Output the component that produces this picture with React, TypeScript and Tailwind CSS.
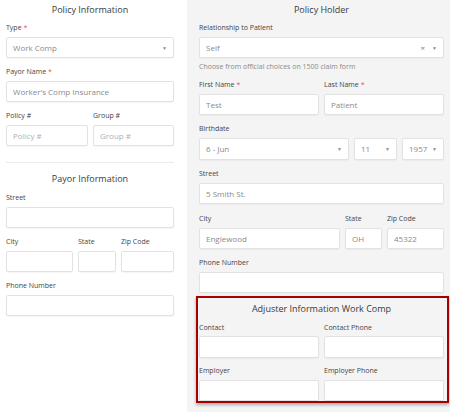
import React from "react";

const font = { fontFamily: '"Open Sans", "Noto Sans", Arial, sans-serif' };

function Label({ text, req }: { text: string; req?: boolean }) {
  return (
    <div className="h-[18px] flex items-center text-[7px] text-[#444] whitespace-nowrap">
      {text}
      {req && <span className="text-[#e05a5a] ml-[2px]">*</span>}
    </div>
  );
}

function Box({ value, className = "", h = "h-[21px]" }: { value?: string; className?: string; h?: string }) {
  return (
    <div
      className={`${h} bg-white border border-[#e2e2e2] rounded-[2px] shadow-[0_1px_1px_rgba(0,0,0,0.04)] flex items-center pl-[6px] text-[8px] text-[#8a8a8a] whitespace-nowrap ${className}`}
    >
      {value}
    </div>
  );
}

function Select({ value, clear, className = "", h = "h-[21px]" }: { value: string; clear?: boolean; className?: string; h?: string }) {
  return (
    <div
      className={`${h} bg-white border border-[#e2e2e2] rounded-[2px] shadow-[0_1px_1px_rgba(0,0,0,0.04)] flex items-center pl-[6px] pr-[6px] text-[8px] text-[#8a8a8a] ${className}`}
    >
      <span className="flex-1">{value}</span>
      {clear && <span className="text-[8px] text-[#777] mr-[7px] leading-none">×</span>}
      <span className="text-[5px] text-[#888] leading-none mt-[1px]">▼</span>
    </div>
  );
}

function Title({ text, className = "" }: { text: string; className?: string }) {
  return (
    <div className={`h-[19px] flex items-center justify-center text-[9px] text-[#3a3a3a] ${className}`}>
      {text}
    </div>
  );
}

export default function App() {
  return (
    <div className="w-[450px] h-[412px] overflow-hidden flex bg-white" style={font}>
      {/* left column */}
      <div className="w-[187px] shrink-0 bg-white pl-[6px] pr-[13px]">
        <Title text="Policy Information" />
        <Label text="Type" req />
        <Select value="Work Comp" />
        <div className="mt-[5px]">
          <Label text="Payor Name" req />
          <Box value="Worker's Comp Insurance" />
        </div>
        <div className="mt-[5px] flex gap-[5px]">
          <div className="w-[82px]">
            <Label text="Policy #" />
            <Box value="Policy #" className="text-[#b0b0b0]" />
          </div>
          <div className="flex-1">
            <Label text="Group #" />
            <Box value="Group #" className="text-[#b0b0b0]" />
          </div>
        </div>
        <div className="mt-[16px] border-t border-[#ececec] pt-[7px]">
          <div className="h-[18px] flex items-center justify-center text-[9px] text-[#3a3a3a]">Payor Information</div>
        </div>
        <div className="mt-[1px]">
          <Label text="Street" />
          <Box />
        </div>
        <div className="mt-[5px] flex gap-[5px]">
          <div className="w-[67px]">
            <Label text="City" />
            <Box />
          </div>
          <div className="w-[38px]">
            <Label text="State" />
            <Box />
          </div>
          <div className="flex-1">
            <Label text="Zip Code" />
            <Box />
          </div>
        </div>
        <div className="mt-[5px]">
          <Label text="Phone Number" />
          <Box />
        </div>
      </div>

      {/* right column */}
      <div className="flex-1 bg-[#f4f4f4] pl-[12px] pr-[6px]">
        <Title text="Policy Holder" />
        <Label text="Relationship to Patient" />
        <Select value="Self" clear />
        <div className="h-[18px] flex items-center text-[7px] text-[#8a8a8a] whitespace-nowrap">
          Choose from official choices on 1500 claim form
        </div>
        <div className="flex gap-[5px]">
          <div className="flex-1">
            <Label text="First Name" req />
            <Box value="Test" />
          </div>
          <div className="flex-1">
            <Label text="Last Name" req />
            <Box value="Patient" />
          </div>
        </div>
        <div className="mt-[5px]">
          <Label text="Birthdate" />
          <div className="flex gap-[5px]">
            <Select value="6 - Jun" className="w-[150px]" h="h-[22px]" />
            <Select value="11" className="w-[43px]" h="h-[22px]" />
            <Select value="1957" className="flex-1" h="h-[22px]" />
          </div>
        </div>
        <div className="mt-[5px]">
          <Label text="Street" />
          <Box value="5 Smith St." />
        </div>
        <div className="mt-[6px] flex gap-[5px]">
          <div className="w-[141px]">
            <Label text="City" />
            <Box value="Englewood" />
          </div>
          <div className="w-[37px]">
            <Label text="State" />
            <Box value="OH" />
          </div>
          <div className="flex-1">
            <Label text="Zip Code" />
            <Box value="45322" />
          </div>
        </div>
        <div className="mt-[5px]">
          <Label text="Phone Number" />
          <Box />
        </div>
        <div className="mt-[3px] -ml-[3px] -mr-[5px] border-2 border-[#a80000] bg-[#f4f4f4] pl-[1px] pr-[3px] shadow-[0_2px_3px_rgba(0,0,0,0.3)]">
          <div className="h-[22px] flex items-center justify-center text-[9px] text-[#3a3a3a]">
            Adjuster Information Work Comp
          </div>
          <div className="flex gap-[5px]">
            <div className="flex-1">
              <div className="h-[16px] flex items-center text-[7px] text-[#444]">Contact</div>
              <Box h="h-[22px]" />
            </div>
            <div className="flex-1">
              <div className="h-[16px] flex items-center text-[7px] text-[#444]">Contact Phone</div>
              <Box h="h-[22px]" />
            </div>
          </div>
          <div className="mt-[4px] flex gap-[5px]">
            <div className="flex-1">
              <Label text="Employer" />
              <Box />
            </div>
            <div className="flex-1">
              <Label text="Employer Phone" />
              <Box />
            </div>
          </div>
        </div>
      </div>
    </div>
  );
}
